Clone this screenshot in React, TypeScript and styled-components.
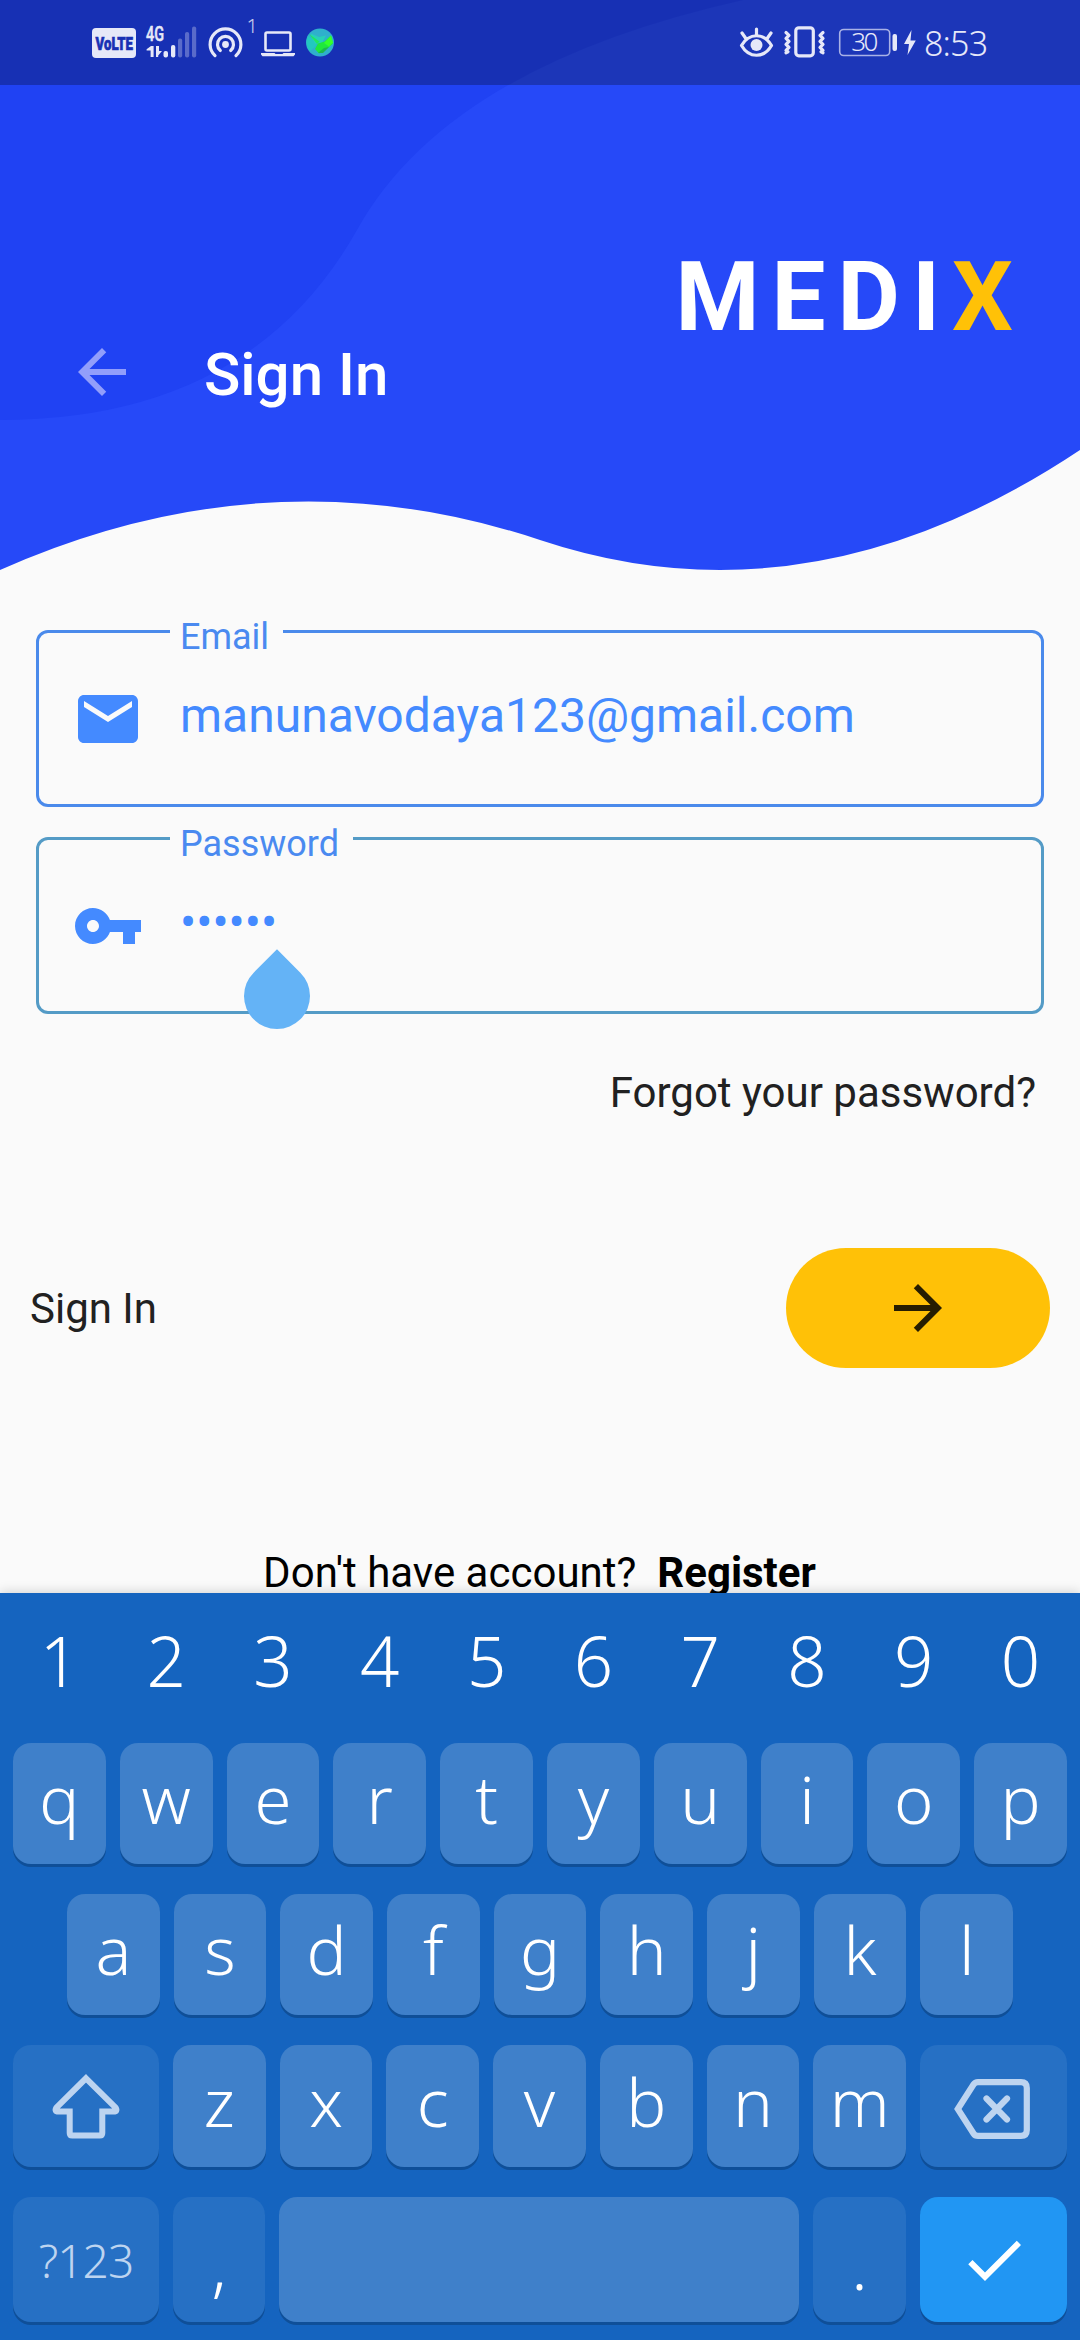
import React from "react";
import styled, { createGlobalStyle } from "styled-components";

const GlobalStyle = createGlobalStyle`
  *, *::before, *::after { box-sizing: border-box; }
  body { margin: 0; background: #fafafa; font-family: Roboto, "Liberation Sans", sans-serif; }
  svg { display: block; flex: none; }
`;

const Screen = styled.main`
  width: 1080px;
  height: 2340px;
  display: flex;
  flex-direction: column;
  overflow: hidden;
  background: #fafafa;
`;

/* ---------- header ---------- */

const Header = styled.header`
  position: relative;
  height: 570px;
  flex: none;
  display: flex;
  flex-direction: column;
`;

const Waves = styled.svg`
  position: absolute;
  inset: 0;
  z-index: 0;
`;

const StatusBar = styled.div`
  position: relative;
  z-index: 1;
  height: 85px;
  padding: 0 90px 0 92px;
  display: flex;
  justify-content: space-between;
  background: rgba(0, 0, 0, 0.26);
  color: #e6e8f8;
`;

const Clock = styled.span`
  width: 66px;
  margin-left: 6px;
  font: 300 34px/86px "Noto Sans", sans-serif;
  letter-spacing: -0.8px;
  white-space: nowrap;
`;

const StatusGroup = styled.div`
  display: flex;
  align-items: center;
`;

const Brand = styled.h1`
  position: relative;
  z-index: 1;
  align-self: flex-end;
  margin: 156px 67px 0 0;
  font-size: 96px;
  line-height: 112px;
  font-weight: 700;
  letter-spacing: 12px;
  color: #fff;
`;

const BrandAccent = styled.span`
  color: #ffc107;
  letter-spacing: 0;
`;

const TitleRow = styled.div`
  position: relative;
  z-index: 1;
  display: flex;
  align-items: center;
  gap: 66px;
  height: 72px;
  margin-top: -17px;
  padding-left: 66px;
  color: #fff;
`;

const Title = styled.h2`
  margin: 5px 0 0;
  font-size: 60px;
  line-height: 70px;
  font-weight: 500;
`;

const BackButton = styled.button`
  padding: 0;
  border: 0;
  background: none;
  color: #929efb;
`;

/* ---------- form ---------- */

const Form = styled.form`
  flex: 1;
  min-height: 0;
  display: flex;
  flex-direction: column;
  padding: 60px 30px 0;
`;

const Field = styled.div<{ $line: string }>`
  position: relative;
  flex: none;
  display: flex;
  align-items: center;
  height: 177px;
  margin: 0 6px 30px;
  padding-left: 33px;
  border: 3px solid ${(p) => p.$line};
  border-radius: 12px;
  color: #448aff;
`;

const FieldLabel = styled.label`
  position: absolute;
  top: -17px;
  left: 131px;
  padding: 0 14px 0 10px;
  background: #fafafa;
  color: #4a8af0;
  font-size: 36px;
  line-height: 42px;
`;

const FieldValue = styled.span`
  margin: -5px 0 0 36px;
  font-size: 48px;
  line-height: 56px;
`;

const CursorHandle = styled.span`
  position: absolute;
  left: 205px;
  top: 123px;
  width: 66px;
  height: 66px;
  border-radius: 0 50% 50% 50%;
  background: #64b3f6;
  transform: rotate(45deg);
`;

const Forgot = styled.a`
  align-self: flex-end;
  margin: 24px 14px 0 0;
  font-size: 42px;
  line-height: 49px;
  color: #212121;
`;

const SubmitRow = styled.div`
  display: flex;
  align-items: center;
  justify-content: space-between;
  margin-top: 131px;
  color: #212121;
  font-size: 42px;
  line-height: 49px;
`;

const SubmitButton = styled.button`
  display: flex;
  align-items: center;
  justify-content: center;
  width: 264px;
  height: 120px;
  padding: 0;
  border: 0;
  border-radius: 60px;
  background: #ffc107;
  color: #261d01;
`;

const RegisterRow = styled.p`
  display: flex;
  justify-content: center;
  gap: 21px;
  margin: 180px 1px 0 0;
  font-size: 42px;
  line-height: 49px;
  color: #000;
`;

const RegisterLink = styled.a`
  font-weight: 700;
`;

/* ---------- keyboard ---------- */

const Keyboard = styled.section`
  position: relative;
  flex: none;
  height: 747px;
  padding: 0 13px;
  background: #1564bf;
  box-shadow: 0 -2px 10px rgba(0, 0, 0, 0.14);
  font-family: "Noto Sans", sans-serif;
  font-weight: 340;
  color: #fff;
`;

const KeyRow = styled.div<{ $height: number; $gapBelow: number; $inset?: number }>`
  display: flex;
  gap: 14px;
  height: ${(p) => p.$height}px;
  margin-bottom: ${(p) => p.$gapBelow}px;
  padding: 0 ${(p) => p.$inset ?? 0}px;
`;

const NumberKey = styled.span`
  flex: 1 1 0;
  text-align: center;
  font-size: 69px;
  line-height: 134px;
`;

const tones = { letter: "#3f80ca", quiet: "#2670c4", accent: "#2196f3" };

const Key = styled.button<{ $tone?: keyof typeof tones; $width?: number }>`
  flex: ${(p) => (p.$width ? `0 0 ${p.$width}px` : "1 1 0")};
  min-width: 0;
  display: flex;
  align-items: center;
  justify-content: center;
  padding: 0;
  border: 0;
  border-radius: 18px;
  background: ${(p) => tones[p.$tone ?? "letter"]};
  box-shadow: 0 3px 0 #0f4f98;
  color: ${(p) => (p.$tone === "quiet" ? "#bdd4f0" : "#fff")};
`;

const Glyph = styled.span<{ $drop?: number }>`
  font: 340 67px/91px "Noto Sans", sans-serif;
  color: #fff;
  padding-top: ${(p) => p.$drop ?? 0}px;
  margin-top: -10px;
`;

const ModeLabel = styled.span`
  margin-top: 1px;
  font: 300 46px/60px "Noto Sans", sans-serif;
  letter-spacing: -1px;
`;

/* ---------- icons ---------- */

const MaterialIcon = ({ d, size = 72 }: { d: string; size?: number }) => (
  <svg width={size} height={size} viewBox="0 0 24 24" fill="currentColor">
    <path d={d} />
  </svg>
);

const ARROW_BACK = "M20 11H7.83l5.59-5.59L12 4l-8 8 8 8 1.41-1.41L7.83 13H20v-2z";
const ARROW_FORWARD = "M12 4l-1.41 1.41L16.17 11H4v2h12.17l-5.58 5.59L12 20l8-8z";
const MAIL = "M20 4H4c-1.1 0-1.99.9-1.99 2L2 18c0 1.1.9 2 2 2h16c1.1 0 2-.9 2-2V6c0-1.1-.9-2-2-2zm0 4l-8 5-8-5V6l8 5 8-5v2z";
const KEY = "M12.65 10C11.83 7.67 9.61 6 7 6c-3.31 0-6 2.69-6 6s2.69 6 6 6c2.61 0 4.83-1.67 5.65-4H17v4h4v-4h2v-4H12.65zM7 14c-1.1 0-2-.9-2-2s.9-2 2-2 2 .9 2 2-.9 2-2 2z";
const CHECK = "M9 16.17L4.83 12l-1.42 1.41L9 19 21 7l-1.41-1.41z";

const StatusLeft = () => (
  <svg width="250" height="85" viewBox="92 0 250 85" fill="#e6e8f8">
    <rect x="92" y="28" width="44" height="30" rx="4" />
    <text x="95.500" y="49.500" textLength="37.500" lengthAdjust="spacingAndGlyphs" fontFamily="Roboto, sans-serif" fontWeight="900" fontSize="19" fill="#1930b4" stroke="#1930b4" strokeWidth="0.700">VoLTE</text>
    <text x="146" y="41" textLength="18" lengthAdjust="spacingAndGlyphs" fontFamily="Roboto, sans-serif" fontWeight="500" fontSize="20" stroke="#e6e8f8" strokeWidth="0.500">4G</text>
    <path d="M151 46h2.600v11h-3v-6.500h-4v-1.200zM156 46h3v5h3l-3.800 4.500v1.500h-2.200z" />
    <rect x="163.500" y="51" width="4.500" height="6.500" rx="2" />
    <rect x="171" y="45" width="4.300" height="12.500" rx="2" />
    <g opacity="0.32">
      <rect x="178" y="38.500" width="4.200" height="19" rx="2" />
      <rect x="185" y="32" width="4.200" height="25.500" rx="2" />
      <rect x="192" y="26.500" width="4.200" height="31" rx="2" />
    </g>
    <g fill="none" stroke="#e6e8f8" strokeWidth="3.200" strokeLinecap="round">
      <path d="M215 55.600a15.400 15.400 0 1 1 21 0" />
      <path d="M220.300 50.500a8 8 0 1 1 10.400 0" />
    </g>
    <circle cx="225.500" cy="44.500" r="3.400" />
    <text x="246.500" y="33" fontFamily="Noto Sans, sans-serif" fontWeight="300" fontSize="20" opacity="0.850">1</text>
    <rect x="265.500" y="32.500" width="25" height="18" rx="1.500" fill="none" stroke="#e6e8f8" strokeWidth="2.600" />
    <path d="M261 53h13.500l1 1h7l1-1H295v1.500l-1.500 1.700h-31L261 54.500z" />
    <circle cx="320" cy="42.500" r="14" fill="#2fb0cc" />
    <path d="M308 36l10 6-3 5-5 4c-4-4-4-10-2-15z" fill="#22c8c0" />
    <path d="M310.500 33.500l8.500 3.500 7-1.500-4 7.500-7 1z" fill="#27d0b8" />
    <path d="M309 34l10.500 7.500-2.500 2.500z" fill="#1fe860" />
    <path d="M315 49l3-5.500 6.500-2 6.500-6 2 8-8 7-6 3z" fill="#1fe83c" />
    <path d="M324 43l7-7.500 2 7-4 4z" fill="#35ff2a" />
    <path d="M318 53l6-5 5-1-6 6z" fill="#1cb84e" />
  </svg>
);

const StatusRight = () => (
  <svg width="180" height="85" viewBox="738 0 180 85" fill="#e6e8f8">
    <g fill="none" stroke="#e6e8f8" strokeWidth="3.200" strokeLinecap="round" strokeLinejoin="round">
      <path d="M741.500 45.500C749 32.500 764 32.500 771.500 45.500C764 58.500 749 58.500 741.500 45.500z" />
      <path d="M756.500 35v-6M745.500 38l-3.500-5M767.500 38l3.500-5" />
      <rect x="795.800" y="27.800" width="17.500" height="28" rx="3" />
      <path d="M787 32.500l3 2.800-3 3 3 3-3 3 3 3-3 3 2 1.500-2 1" transform="translate(-1 0)" />
      <path d="M787 32.500l3 2.800-3 3 3 3-3 3 3 3-3 3 2 1.500-2 1" transform="matrix(-1 0 0 1 1610 0)" />
    </g>
    <circle cx="756.500" cy="45" r="6" />
    <rect x="839.700" y="29.500" width="50" height="26" rx="4" fill="none" stroke="#a9b2e6" strokeWidth="1.600" />
    <text x="864.800" y="51" textAnchor="middle" textLength="27" fontFamily="Noto Sans, sans-serif" fontWeight="300" fontSize="26">30</text>
    <rect x="892.500" y="34" width="4.500" height="17" rx="2" />
    <path d="M911.500 30l-7.500 14h5l-1.500 11 8.300-14.500h-5.300z" />
  </svg>
);

const ShiftIcon = () => (
  <svg width="68" height="65" viewBox="0 0 68 65" fill="none" stroke="currentColor" strokeWidth="6">
    <path d="M34 4.300L63.600 33.500Q66 37.500 61.500 37.500H50.300V59Q50.300 61.500 47.800 61.500H20.200Q17.700 61.500 17.700 59V37.500H6.500Q2 37.500 4.400 33.500z" />
  </svg>
);

const BackspaceIcon = () => (
  <svg width="76" height="60" viewBox="0 0 76 60" fill="none" stroke="currentColor" strokeWidth="6.200">
    <path d="M3.800 30L19.500 5.500Q21 3.100 24 3.100H67Q72.800 3.100 72.800 9V51Q72.800 56.900 67 56.900H24Q21 56.900 19.500 54.500z" />
    <path d="M32.500 19.500L53 40.500M53 19.500L32.500 40.500" strokeLinecap="round" />
  </svg>
);

/* Nudges the backspace outline, whose pointed side is visually lighter. */
const BackspaceSlot = styled.span`
  margin: 6px 3px 0 0;
`;

const letters = (row: string) => row.split("").map((c) => (
  <Key key={c}><Glyph>{c}</Glyph></Key>
));

export default function App() {
  return (
    <>
      <GlobalStyle />
      <Screen>
        <Header>
          <Waves width="1080" height="570" viewBox="0 0 1080 570">
            <path d="M0 0H1080V450Q810 630 540 540Q270 450 0 570z" fill="#2649f8" />
            <path d="M0 0H743Q448 66 357 230Q250 420 0 420z" fill="#2042f3" />
          </Waves>
          <StatusBar>
            <StatusGroup><StatusLeft /></StatusGroup>
            <StatusGroup><StatusRight /><Clock>8:53</Clock></StatusGroup>
          </StatusBar>
          <Brand>MEDI<BrandAccent>X</BrandAccent></Brand>
          <TitleRow>
            <BackButton type="button"><MaterialIcon d={ARROW_BACK} /></BackButton>
            <Title>Sign In</Title>
          </TitleRow>
        </Header>

        <Form>
          <Field $line="#4a8aeb">
            <FieldLabel>Email</FieldLabel>
            <MaterialIcon d={MAIL} />
            <FieldValue>manunavodaya123@gmail.com</FieldValue>
          </Field>
          <Field $line="#549bc6">
            <FieldLabel>Password</FieldLabel>
            <MaterialIcon d={KEY} />
            <FieldValue>••••••</FieldValue>
            <CursorHandle />
          </Field>
          <Forgot>Forgot your password?</Forgot>
          <SubmitRow>
            <span>Sign In</span>
            <SubmitButton type="button"><MaterialIcon d={ARROW_FORWARD} /></SubmitButton>
          </SubmitRow>
          <RegisterRow>
            <span>Don't have account?</span>
            <RegisterLink>Register</RegisterLink>
          </RegisterRow>
        </Form>

        <Keyboard>
          <KeyRow $height={150} $gapBelow={0}>
            {"1234567890".split("").map((n) => <NumberKey key={n}>{n}</NumberKey>)}
          </KeyRow>
          <KeyRow $height={121} $gapBelow={30}>{letters("qwertyuiop")}</KeyRow>
          <KeyRow $height={121} $gapBelow={30} $inset={54}>{letters("asdfghjkl")}</KeyRow>
          <KeyRow $height={122} $gapBelow={30}>
            <Key $tone="quiet" $width={146}><ShiftIcon /></Key>
            {letters("zxcvbnm")}
            <Key $tone="quiet" $width={147}><BackspaceSlot><BackspaceIcon /></BackspaceSlot></Key>
          </KeyRow>
          <KeyRow $height={125} $gapBelow={0}>
            <Key $tone="quiet" $width={146}><ModeLabel>?123</ModeLabel></Key>
            <Key $tone="quiet" $width={92}><Glyph $drop={20}>,</Glyph></Key>
            <Key />
            <Key $tone="quiet" $width={93}><Glyph $drop={20}>.</Glyph></Key>
            <Key $tone="accent" $width={147}><MaterialIcon d={CHECK} /></Key>
          </KeyRow>
        </Keyboard>
      </Screen>
    </>
  );
}
